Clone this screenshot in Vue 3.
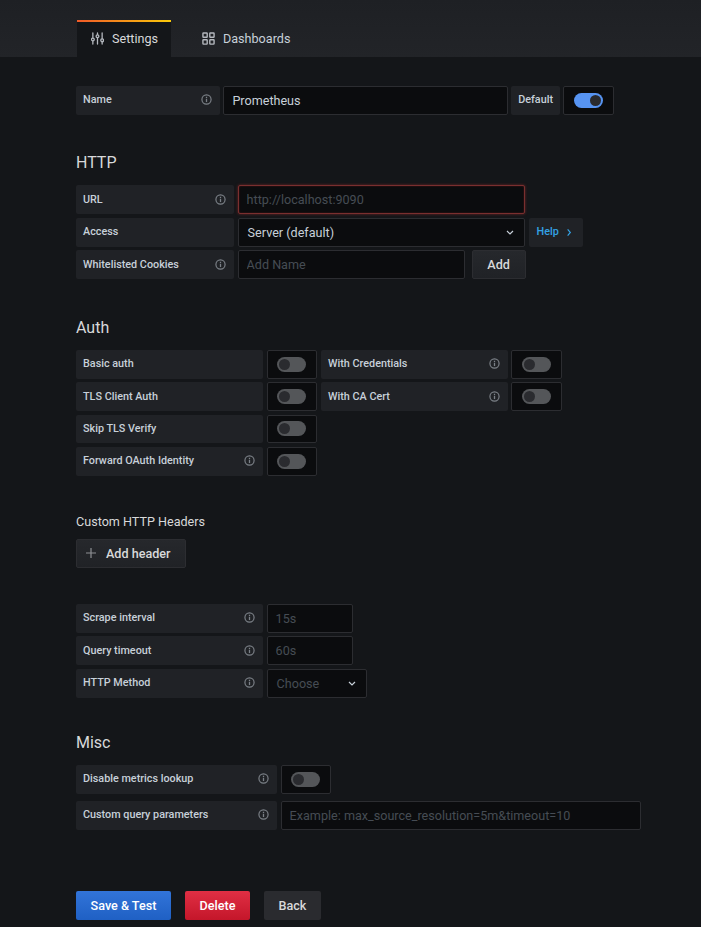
<script setup>
const authLeft = [
  { label: 'Basic auth', info: false },
  { label: 'TLS Client Auth', info: false },
  { label: 'Skip TLS Verify', info: false },
  { label: 'Forward OAuth Identity', info: true }
]
</script>

<template>
  <div class="page">
    <svg class="defs" aria-hidden="true">
      <symbol id="info" viewBox="0 0 12 12">
        <circle cx="6" cy="6" r="5" fill="none" stroke="currentColor" stroke-width="1.3" />
        <rect x="5.3" y="5.2" width="1.4" height="3.6" fill="currentColor" />
        <rect x="5.3" y="3" width="1.4" height="1.4" fill="currentColor" />
      </symbol>
      <symbol id="chev" viewBox="0 0 8 5">
        <path d="M1 1 L4 4 L7 1" fill="none" stroke="currentColor" stroke-width="1.2" />
      </symbol>
    </svg>

    <header class="head">
      <div class="tab active">
        <svg class="tab-icon" viewBox="0 0 14 14" fill="none" stroke="currentColor" stroke-width="1.4" stroke-linecap="round">
          <path d="M2 1v5M2 10v3M7 1v1.5M7 6.5V13M12 1v6M12 11v2" />
          <circle cx="2" cy="8" r="1.5" />
          <circle cx="7" cy="4.5" r="1.5" />
          <circle cx="12" cy="9" r="1.5" />
        </svg>
        <span>Settings</span>
      </div>
      <div class="tab">
        <svg class="tab-icon" viewBox="0 0 14 14" fill="none" stroke="currentColor" stroke-width="1.5">
          <rect x="1" y="1" width="4.6" height="4.6" rx=".6" />
          <rect x="8.4" y="1" width="4.6" height="4.6" rx=".6" />
          <rect x="1" y="8.4" width="4.6" height="4.6" rx=".6" />
          <rect x="8.4" y="8.4" width="4.6" height="4.6" rx=".6" />
        </svg>
        <span>Dashboards</span>
      </div>
    </header>

    <main class="body">
      <div class="row">
        <div class="label name-label">Name<svg class="info"><use href="#info" /></svg></div>
        <input class="input name-input" value="Prometheus" />
        <div class="label plain">Default</div>
        <div class="switch"><span class="track on"><span class="knob"></span></span></div>
      </div>

      <h3 class="title http-title">HTTP</h3>
      <div class="row">
        <div class="label w158">URL<svg class="info"><use href="#info" /></svg></div>
        <input class="input url-input" placeholder="http://localhost:9090" />
      </div>
      <div class="row">
        <div class="label w158">Access</div>
        <div class="select access"><span>Server (default)</span><svg class="chev"><use href="#chev" /></svg></div>
        <div class="label help">Help<svg class="help-chev" viewBox="0 0 6 10"><path d="M1.5 1.5 L4.5 5 L1.5 8.5" fill="none" stroke="currentColor" stroke-width="1.3" /></svg></div>
      </div>
      <div class="row last">
        <div class="label w158">Whitelisted Cookies<svg class="info"><use href="#info" /></svg></div>
        <input class="input cookie-input" placeholder="Add Name" />
        <button class="btn-add">Add</button>
      </div>

      <h3 class="title auth-title">Auth</h3>
      <div class="auth">
        <div class="auth-col">
          <div v-for="item in authLeft" :key="item.label" class="row">
            <div class="label w187">{{ item.label }}<svg v-if="item.info" class="info"><use href="#info" /></svg></div>
            <div class="switch"><span class="track"><span class="knob"></span></span></div>
          </div>
        </div>
        <div class="auth-col">
          <div class="row">
            <div class="label w186">With Credentials<svg class="info"><use href="#info" /></svg></div>
            <div class="switch"><span class="track"><span class="knob"></span></span></div>
          </div>
          <div class="row">
            <div class="label w186">With CA Cert<svg class="info"><use href="#info" /></svg></div>
            <div class="switch"><span class="track"><span class="knob"></span></span></div>
          </div>
        </div>
      </div>

      <h4 class="subtitle">Custom HTTP Headers</h4>
      <button class="btn-header">
        <svg class="plus" viewBox="0 0 10 10"><path d="M5 0v10M0 5h10" stroke="currentColor" stroke-width="1.2" /></svg>
        Add header
      </button>

      <div class="prom">
        <div class="row">
          <div class="label w187">Scrape interval<svg class="info"><use href="#info" /></svg></div>
          <input class="input small" placeholder="15s" />
        </div>
        <div class="row">
          <div class="label w187">Query timeout<svg class="info"><use href="#info" /></svg></div>
          <input class="input small" placeholder="60s" />
        </div>
        <div class="row last">
          <div class="label w187">HTTP Method<svg class="info"><use href="#info" /></svg></div>
          <div class="select method"><span>Choose</span><svg class="chev"><use href="#chev" /></svg></div>
        </div>
      </div>

      <h3 class="title misc-title">Misc</h3>
      <div class="row misc-first">
        <div class="label w201">Disable metrics lookup<svg class="info"><use href="#info" /></svg></div>
        <div class="switch"><span class="track"><span class="knob"></span></span></div>
      </div>
      <div class="row last">
        <div class="label w201">Custom query parameters<svg class="info"><use href="#info" /></svg></div>
        <input class="input query" placeholder="Example: max_source_resolution=5m&timeout=10" />
      </div>

      <div class="actions">
        <button class="btn save">Save &amp; Test</button>
        <button class="btn delete">Delete</button>
        <button class="btn back">Back</button>
      </div>
    </main>
  </div>
</template>

<style>
html, body { margin: 0; background: #141619; }
</style>

<style scoped>
.page {
  width: 701px;
  height: 927px;
  overflow: hidden;
  background: #141619;
  font-family: Roboto, "Liberation Sans", sans-serif;
  color: #d8d9da;
}
.defs { display: none; }
.head {
  height: 57px;
  box-sizing: border-box;
  padding: 20px 0 0 77px;
  display: flex;
  gap: 17px;
  background: linear-gradient(#1e2024, #222428);
}
.tab {
  height: 37px;
  box-sizing: border-box;
  padding: 0 14px;
  display: flex;
  align-items: center;
  gap: 8px;
  font-size: 12.6px;
  color: #c7d0d9;
}
.tab.active {
  width: 94px;
  background: #141619;
  position: relative;
  color: #d8d9da;
}
.tab.active::before {
  content: "";
  position: absolute;
  left: 0;
  right: 0;
  top: 0;
  height: 2px;
  background: linear-gradient(90deg, #f05a28, #fbca0a);
}
.tab-icon { width: 13px; height: 13px; flex: none; color: #b4b8be; }
.body { padding: 29px 0 0 76px; }
.row {
  display: flex;
  gap: 3.6px;
  height: 28.8px;
  margin-bottom: 3.6px;
}
.row.last { margin-bottom: 0; }
.label {
  box-sizing: border-box;
  height: 100%;
  padding: 0 7px 1px;
  display: flex;
  align-items: center;
  justify-content: space-between;
  background: #202226;
  border-radius: 2px;
  font-size: 10.8px;
  font-weight: 500;
  color: #c7d0d9;
  white-space: nowrap;
}
.name-label { width: 143.8px; }
.w158 { width: 158px; }
.w187 { width: 187px; }
.w186 { width: 186.6px; }
.w201 { width: 201px; }
.plain { width: 48.6px; }
.info {
  width: 11px;
  height: 11px;
  flex: none;
  color: #7b8087;
  margin-right: 1px;
}
.input, .select {
  box-sizing: border-box;
  height: 100%;
  background: #0b0c0e;
  border: 1px solid #2c2d31;
  border-radius: 2px;
  font-family: inherit;
  font-size: 12.6px;
  color: #c7d0d9;
  outline: none;
  padding: 0 8px;
  margin: 0;
}
.input::placeholder { color: #464c54; opacity: 1; }
.name-input { width: 284.2px; }
.url-input {
  width: 287.4px;
  border-color: #7a2f2f;
  box-shadow: 0 0 3px rgba(200, 50, 50, .5), inset 0 0 2px rgba(200, 50, 50, .35);
}
.cookie-input { width: 227px; }
.small { width: 86px; }
.query { width: 360px; }
.select {
  display: flex;
  align-items: center;
  justify-content: space-between;
}
.access { width: 287.4px; padding: 0 10px 0 9px; }
.method { width: 100px; padding: 0 10px 0 9px; color: #464c54; }
.chev { width: 8px; height: 5px; color: #c7d0d9; flex: none; margin-top: 1px; }
.help {
  width: 54px;
  padding: 0 11px 1px 8px;
  color: #33a2e5;
}
.help-chev { width: 6px; height: 9px; margin-top: 1px; }
.btn-add {
  width: 54px;
  margin-left: 3.4px;
  height: 100%;
  background: linear-gradient(#26282c, #202226);
  border: 1px solid #2c2d31;
  border-radius: 2px;
  color: #d8d9da;
  font-family: inherit;
  font-size: 12.6px;
  font-weight: 500;
  padding: 0;
}
.switch {
  box-sizing: border-box;
  width: 50.4px;
  height: 100%;
  display: flex;
  align-items: center;
  justify-content: center;
  background: #0b0c0e;
  border: 1px solid #2c2d31;
  border-radius: 2px;
}
.track {
  width: 29px;
  height: 15px;
  border-radius: 8px;
  background: #545659;
  display: flex;
  align-items: center;
  padding: 0 2px;
  box-sizing: border-box;
}
.track.on { background: #5794f2; justify-content: flex-end; }
.knob {
  width: 11px;
  height: 11px;
  border-radius: 50%;
  background: #2a2b2f;
}
.title {
  margin: 0;
  font-size: 16px;
  line-height: 20px;
  font-weight: 400;
  color: #d8d9da;
}
.http-title { margin: 38px 0 12.6px; }
.auth-title { margin: 39px 0 11.8px; }
.misc-title { margin: 35px 0 12.4px; }
.auth { display: flex; gap: 4px; }
.subtitle {
  margin: 34.6px 0 9px;
  font-size: 12.6px;
  line-height: 16px;
  font-weight: 400;
  color: #d8d9da;
}
.btn-header {
  width: 110px;
  height: 29px;
  display: flex;
  align-items: center;
  gap: 10px;
  padding: 0 0 0 9px;
  background: linear-gradient(#26282c, #202226);
  border: 1px solid #2c2d31;
  border-radius: 2px;
  color: #d8d9da;
  font-family: inherit;
  font-size: 12.6px;
  font-weight: 500;
}
.plus { width: 10px; height: 10px; color: #8e9094; flex: none; }
.prom { margin-top: 36px; }
.misc-first { margin-bottom: 7.2px; }
.actions { display: flex; gap: 14px; margin-top: 61.2px; }
.btn {
  height: 29px;
  border: 0;
  border-radius: 2px;
  padding: 0;
  font-family: inherit;
  font-size: 12.6px;
  font-weight: 500;
  color: #fff;
}
.save { width: 95px; background: linear-gradient(#3274d9, #1f60c4); }
.delete { width: 65px; background: linear-gradient(#e02f44, #c4162a); }
.back { width: 57px; background: #2a2b2f; color: #d8d9da; }
</style>
